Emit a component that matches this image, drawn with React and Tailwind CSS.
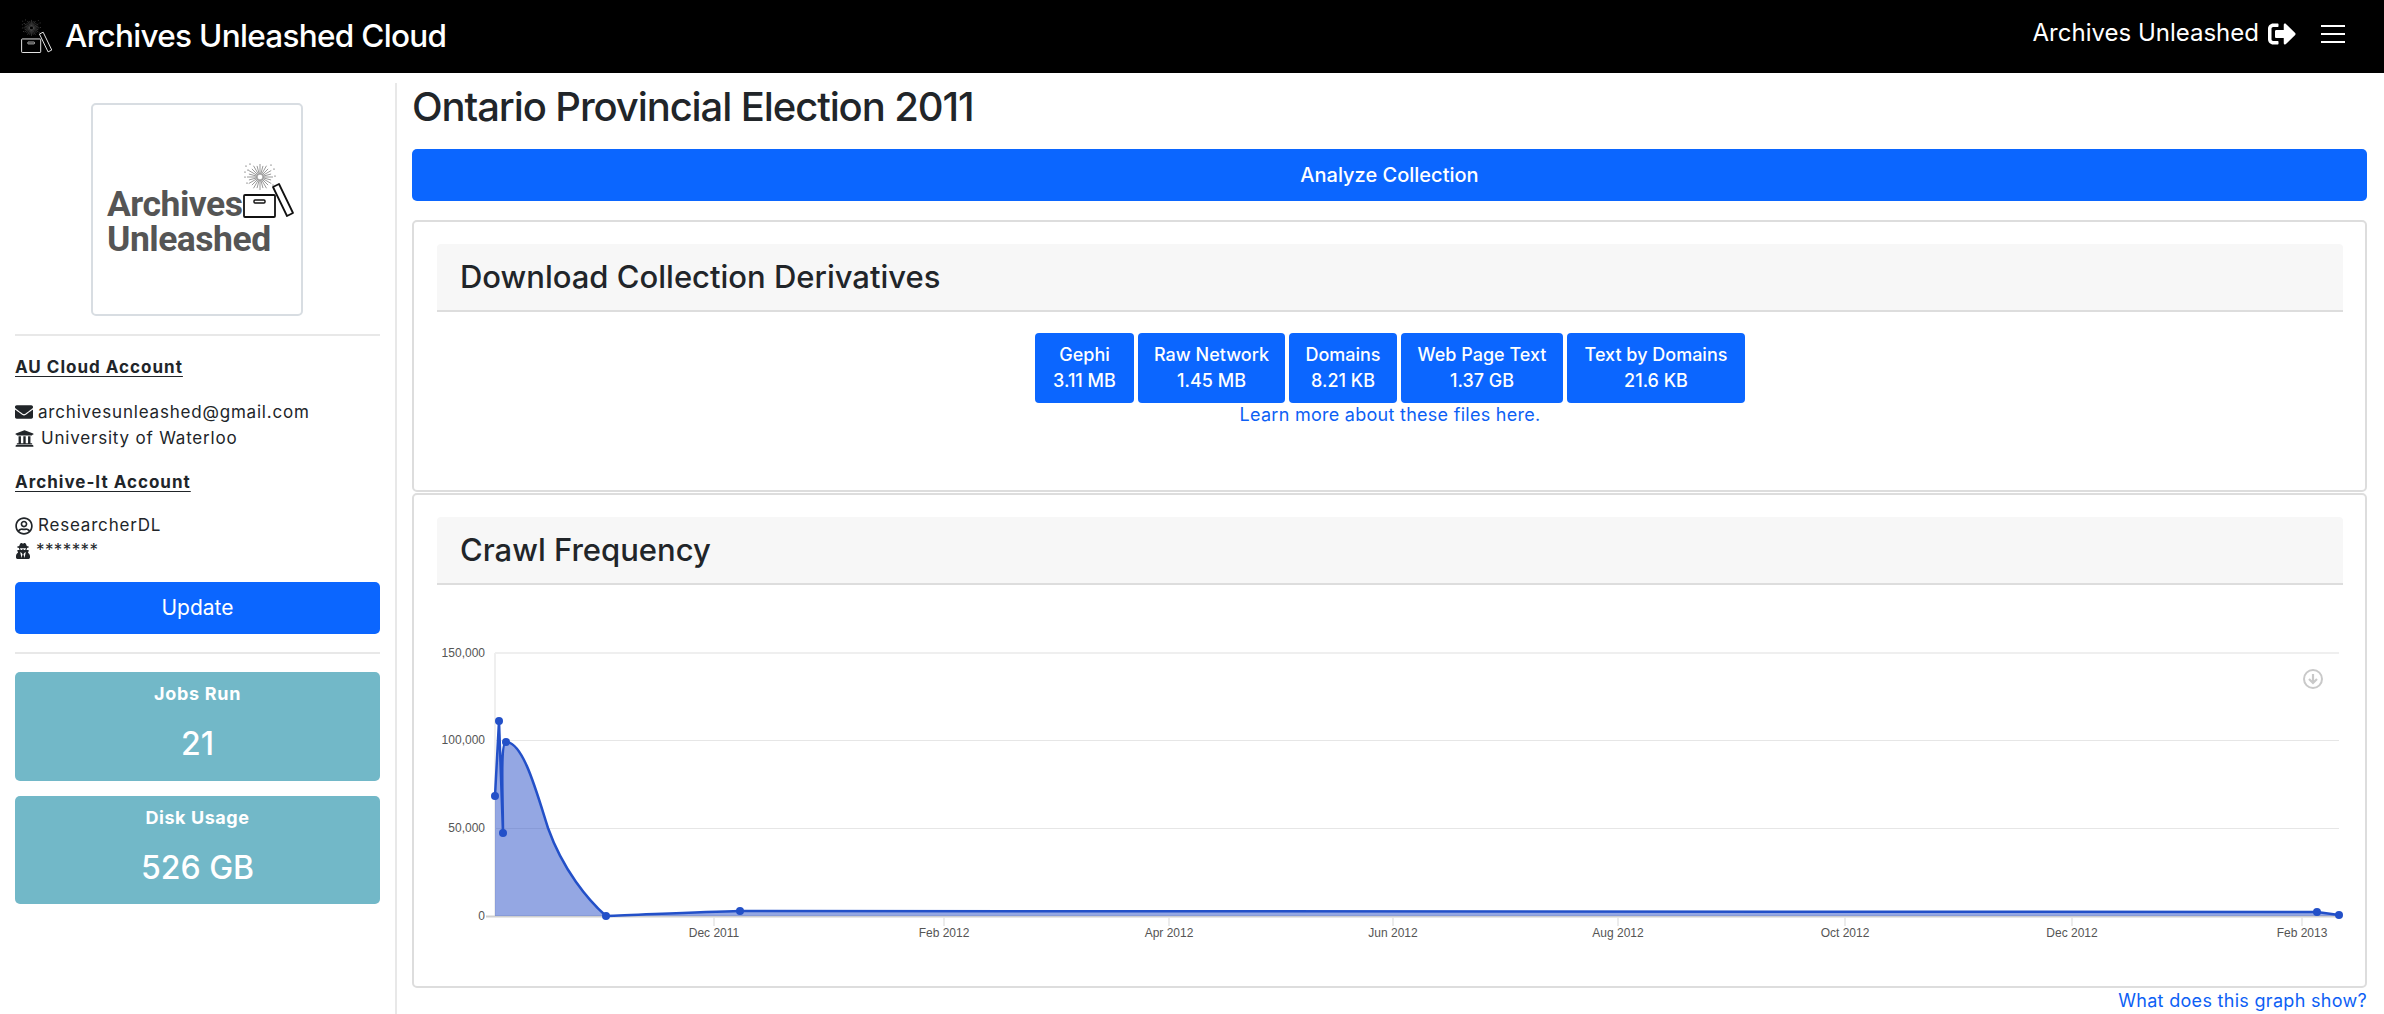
import React from 'react';
import { FaEnvelope, FaUniversity, FaRegUserCircle, FaUserSecret, FaSignOutAlt } from 'react-icons/fa';

const downloads = [
  { name: 'Gephi', size: '3.11 MB', width: 'w-[99px]' },
  { name: 'Raw Network', size: '1.45 MB', width: 'w-[147px]' },
  { name: 'Domains', size: '8.21 KB', width: 'w-[108px]' },
  { name: 'Web Page Text', size: '1.37 GB', width: 'w-[162px]' },
  { name: 'Text by Domains', size: '21.6 KB', width: 'w-[178px]' },
];

const burstAngles = [0, 15, 30, 45, 60, 75, 90, 105, 120, 135, 150, 165, 180, 195, 210, 225, 240, 255, 270, 285, 300, 315, 330, 345];
const burstDots = [
  [3, 3], [7, 1], [2, 9], [5, 7], [28, 2], [31, 6], [30, 22], [4, 20], [2, 14], [32, 13],
];

const BoxLogo = ({ color, burst, strokeWidth = 1.6 }) => (
  <svg viewBox="0 0 52 56" className="w-full h-full" fill="none">
    <g stroke={burst} strokeWidth="0.5">
      {burstAngles.map((a) => (
        <line
          key={a}
          x1={17 + Math.cos((a * Math.PI) / 180) * 2.5}
          y1={14 + Math.sin((a * Math.PI) / 180) * 2.5}
          x2={17 + Math.cos((a * Math.PI) / 180) * (a % 30 === 0 ? 13 : 11.5)}
          y2={14 + Math.sin((a * Math.PI) / 180) * (a % 30 === 0 ? 13 : 11.5)}
        />
      ))}
    </g>
    {burstDots.map(([x, y]) => (
      <circle key={`${x}-${y}`} cx={x} cy={y} r="0.6" fill={burst} />
    ))}
    <rect x="1" y="32" width="31" height="22" rx="1" stroke={color} strokeWidth={strokeWidth} />
    <rect x="11" y="37" width="11" height="3" rx="1" stroke={color} strokeWidth={strokeWidth * 0.8} />
    <path d="M30 24 L36 21 L50 50 L44 53 Z" stroke={color} strokeWidth={strokeWidth} strokeLinejoin="round" />
  </svg>
);

const Chart = () => {
  // coordinates are page pixels minus the chart's origin (438, 630)
  const ox = 438;
  const oy = 630;
  const gridY = [740, 828];
  const yLabels = [
    ['150,000', 653],
    ['100,000', 740],
    ['50,000', 828],
    ['0', 916],
  ];
  const xLabels = [
    ['Dec 2011', 714],
    ['Feb 2012', 944],
    ['Apr 2012', 1169],
    ['Jun 2012', 1393],
    ['Aug 2012', 1618],
    ['Oct 2012', 1845],
    ['Dec 2012', 2072],
    ['Feb 2013', 2302],
  ];
  const line =
    'M57 166 L61 91 L65 203 C65 170 62 112 68 112 C85 112 98 160 110 198 C125 240 150 270 168 286 C200 285 260 282 302 281 L1879 282 L1901 285';
  const points = [
    [57, 166],
    [61, 91],
    [65, 203],
    [68, 112],
    [168, 286],
    [302, 281],
    [1879, 282],
    [1901, 285],
  ];
  return (
    <svg width="1904" height="340" viewBox="0 0 1904 340" className="block overflow-visible">
      <g stroke="#e6e6e6" strokeWidth="1">
        {gridY.map((y) => (
          <line key={y} x1={495 - ox} x2="1901" y1={y - oy + 0.5} y2={y - oy + 0.5} />
        ))}
      </g>
      <line x1={495 - ox} x2="1901" y1="23" y2="23" stroke="#efefef" strokeWidth="2" />
      <line x1={495 - ox} x2={495 - ox} y1="23" y2="286" stroke="#efefef" strokeWidth="2" />
      <line x1="48" x2="1901" y1="286.5" y2="286.5" stroke="#cfcfcf" strokeWidth="2" />
      {xLabels.map(([t, x]) => (
        <line key={t} x1={x - ox} x2={x - ox} y1="287" y2="296" stroke="#e6e6e6" strokeWidth="1.5" />
      ))}
      <path d={`${line} L1901 286 L57 286 Z`} fill="#2a50c8" fillOpacity="0.5" />
      <path d={line} fill="none" stroke="#2350c8" strokeWidth="2.5" />
      {points.map(([x, y]) => (
        <circle key={x} cx={x} cy={y} r="4" fill="#2350c8" />
      ))}
      <g fontFamily="Liberation Sans, Arial, sans-serif" fontSize="12" fill="#555555">
        {yLabels.map(([t, y]) => (
          <text key={t} x="47" y={y - oy + 4} textAnchor="end">{t}</text>
        ))}
        {xLabels.map(([t, x]) => (
          <text key={t} x={x - ox} y="307" textAnchor="middle">{t}</text>
        ))}
      </g>
      <g fill="none" stroke="#c9c9c9" transform="translate(1875 49)">
        <circle cx="0" cy="0" r="9" strokeWidth="2" />
        <path d="M0 -5 V3 M-4 0 L0 4 L4 0" strokeWidth="2.2" />
      </g>
    </svg>
  );
};

const CardHeader = ({ children }) => (
  <div className="h-[68px] flex items-center pl-[23px] bg-[#f7f7f7] border-b-2 border-[#dddddd] rounded-t-[4px] text-[31px] text-[#212529] font-medium">
    {children}
  </div>
);

const App = () => {
  return (
    <div className="h-[1014px] overflow-hidden bg-white font-['Inter',sans-serif] text-[#212529]">
      <nav className="h-[73px] bg-black flex items-center text-white pl-[21px] pr-[39px]">
        <div className="w-[32px] h-[35px] mr-[12px] -mt-px">
          <BoxLogo color="#e6e6e6" burst="#a0a0a0" />
        </div>
        <span className="text-[31.5px] font-medium tracking-[-0.7px] -mt-[2px]">Archives Unleashed Cloud</span>
        <span className="ml-auto text-[24px] -mt-[7px]">Archives Unleashed</span>
        <FaSignOutAlt className="ml-[9px] -mt-[6px] text-[28px]" />
        <svg width="24" height="18" viewBox="0 0 24 18" className="ml-[25px] -mt-[6px]" stroke="#ffffff" strokeWidth="2">
          <path d="M0 1H24M0 9H24M0 17H24" />
        </svg>
      </nav>

      <div className="flex">
        <aside className="w-[397px] shrink-0 mt-[10px] border-r-2 border-[#e8e8e8] pl-[15px] pr-[15px] h-[931px]">
          <div className="mt-[20px] ml-[76px] w-[212px] h-[213px] border-2 border-[#d8dde2] rounded-[5px] pt-[82px] pl-[14px] relative">
            <div className="font-['Roboto',sans-serif] font-bold text-[35.5px] leading-[34.5px] text-[#555555] tracking-[-0.5px]">
              <div>Archives</div>
              <div>Unleashed</div>
            </div>
            <div className="absolute left-[150px] top-[58px] w-[52px] h-[56px]">
              <BoxLogo color="#111111" burst="#333333" strokeWidth={1.8} />
            </div>
          </div>
          <hr className="mt-[18px] border-t-2 border-[#e8e8e8]" />

          <h3 className="mt-[19px] text-[17px] leading-[24px] font-bold underline underline-offset-[3px] tracking-[1px]">AU Cloud Account</h3>
          <div className="mt-[20px] text-[17px] leading-[26px] tracking-[0.8px]">
            <div className="flex items-center gap-[5px]">
              <FaEnvelope className="text-[18px]" />
              archivesunleashed@gmail.com
            </div>
            <div className="flex items-center gap-[7px]">
              <FaUniversity className="text-[19px]" />
              University of Waterloo
            </div>
          </div>
          <h3 className="mt-[19px] text-[17px] leading-[24px] font-bold underline underline-offset-[3px] tracking-[1px]">Archive-It Account</h3>
          <div className="mt-[19px] text-[17px] leading-[25px] tracking-[0.8px]">
            <div className="flex items-center gap-[5px]">
              <FaRegUserCircle className="text-[18px]" />
              ResearcherDL
            </div>
            <div className="flex items-center gap-[5px] tracking-[0.4px]">
              <FaUserSecret className="text-[16px]" />
              *******
            </div>
          </div>
          <button className="mt-[19px] w-full h-[52px] bg-[#0b66ff] text-white rounded-[5px] text-[21px]">Update</button>
          <hr className="mt-[18px] border-t-2 border-[#e8e8e8]" />

          <div className="mt-[18px] h-[109px] bg-[#72b8c8] rounded-[5px] text-white text-center pt-[10px]">
            <div className="text-[18px] font-bold leading-[24px] tracking-[0.7px]">Jobs Run</div>
            <div className="mt-[18px] text-[32px] font-medium leading-[40px]">21</div>
          </div>
          <div className="mt-[15px] h-[108px] bg-[#72b8c8] rounded-[5px] text-white text-center pt-[10px]">
            <div className="text-[18px] font-bold leading-[24px] tracking-[0.55px]">Disk Usage</div>
            <div className="mt-[18px] text-[32px] font-medium leading-[40px]">526 GB</div>
          </div>
        </aside>

        <main className="flex-1 pl-[15px] pr-[17px]">
          <h1 className="mt-[10px] mb-[18px] h-[48px] flex items-center text-[40px] font-medium tracking-[-1.1px]">Ontario Provincial Election 2011</h1>
          <button className="block w-full h-[52px] bg-[#0b66ff] text-white rounded-[5px] text-[20px] font-medium">Analyze Collection</button>

          <section className="mt-[19px] h-[272px] border-2 border-[#dddddd] rounded-[5px] pl-[23px] pr-[22px] pt-[22px]">
            <CardHeader>Download Collection Derivatives</CardHeader>
            <div className="mt-[21px] flex justify-center gap-[4px]">
              {downloads.map((d) => (
                <button key={d.name} className={`${d.width} h-[70px] bg-[#0b66ff] text-white rounded-[4px] text-[18px] font-medium leading-[26px]`}>
                  {d.name}
                  <br />
                  {d.size}
                </button>
              ))}
            </div>
            <p className="text-center text-[18px] leading-[24px] tracking-[0.27px] text-[#0d5ff5]">Learn more about these files here.</p>
          </section>

          <section className="mt-[1px] h-[495px] border-2 border-[#dddddd] rounded-[5px] pl-[23px] pr-[22px] pt-[22px]">
            <CardHeader>Crawl Frequency</CardHeader>
            <div className="mt-[45px] ml-px">
              <Chart />
            </div>
          </section>
          <p className="text-right text-[18px] leading-[26px] tracking-[0.3px] text-[#0d5ff5]">What does this graph show?</p>
        </main>
      </div>
    </div>
  );
};

export default App;
